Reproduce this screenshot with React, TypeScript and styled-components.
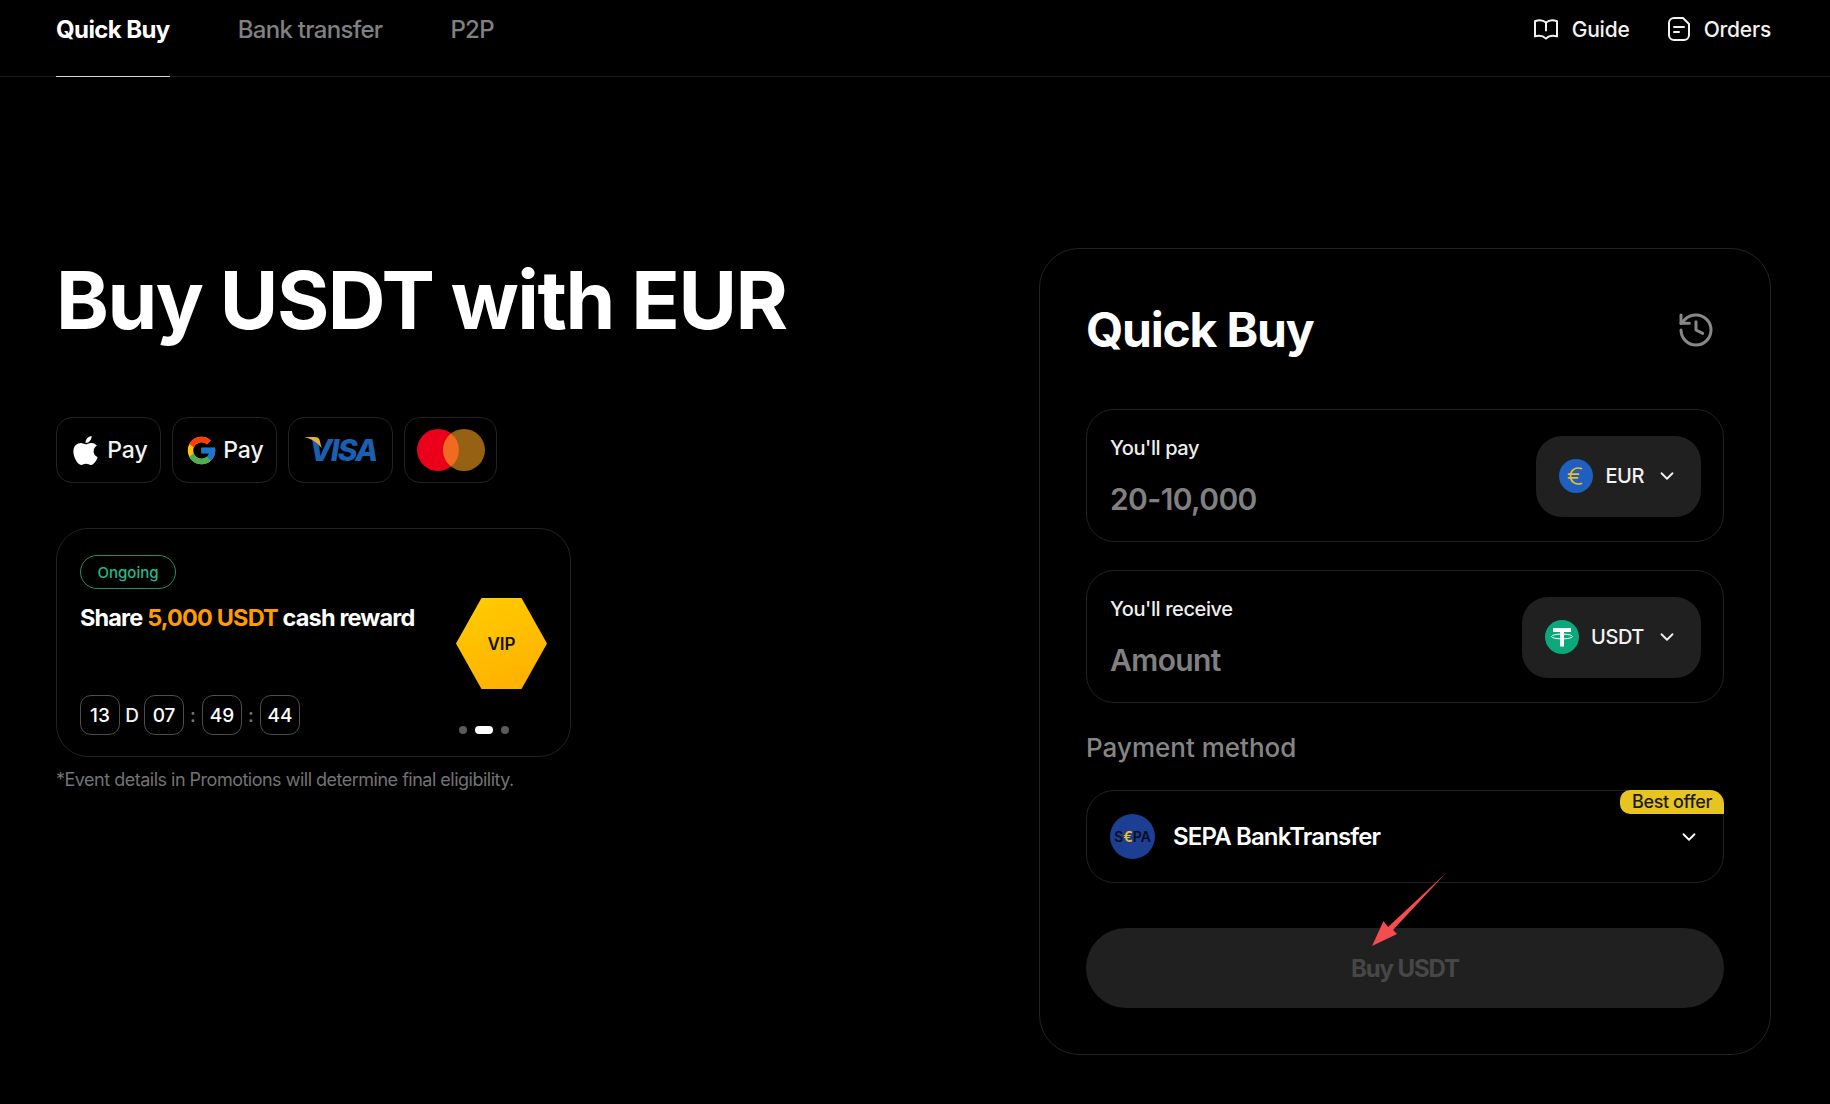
import { ChevronDown, History } from "lucide-react";
import { FaApple } from "react-icons/fa";
import { FcGoogle } from "react-icons/fc";
import styled, { createGlobalStyle } from "styled-components";

const GlobalStyle = createGlobalStyle`
  html, body {
    margin: 0;
    padding: 0;
    background: #000;
    color: #fff;
    font-family: Inter, "Liberation Sans", sans-serif;
  }
  * {
    box-sizing: border-box;
  }
`;

const Page = styled.div`
  min-height: 1104px;
  background: #000;
`;

/* Top bar */
const Header = styled.header`
  height: 77px;
  display: flex;
  align-items: stretch;
  justify-content: space-between;
  padding: 0 59px 0 56px;
  border-bottom: 1px solid #1c1c1c;
`;

const Tabs = styled.nav`
  display: flex;
  gap: 68px;
`;

const Tab = styled.a<{ $active?: boolean }>`
  height: 77px;
  padding-top: 15px;
  line-height: 30px;
  font-size: 24px;
  letter-spacing: ${({ $active }) => ($active ? "-0.6px" : "-0.7px")};
  font-weight: ${({ $active }) => ($active ? 700 : 500)};
  color: ${({ $active }) => ($active ? "#fff" : "#808080")};
  border-bottom: 1px solid ${({ $active }) => ($active ? "#d8d8d8" : "transparent")};
`;

const HeaderLinks = styled.div`
  display: flex;
  gap: 37px;
  padding-top: 14px;
`;

const HeaderLink = styled.a`
  display: flex;
  align-items: center;
  height: 30px;
  gap: 13px;
  font-size: 21px;
  font-weight: 500;
  letter-spacing: -0.2px;
  color: #f2f2f2;
`;

const Main = styled.main`
  display: flex;
  justify-content: space-between;
  align-items: flex-start;
  padding: 171px 59px 0 56px;
`;

/* Left column */
const Intro = styled.section`
  width: 760px;
`;

const Title = styled.h1`
  margin: 4px 0 0;
  font-size: 80px;
  line-height: 96px;
  font-weight: 700;
  letter-spacing: -1.5px;
  white-space: nowrap;
`;

const PayRow = styled.div`
  display: flex;
  gap: 11px;
  margin-top: 69px;
`;

const PayChip = styled.div<{ $width: number }>`
  width: ${({ $width }) => $width}px;
  height: 66px;
  display: flex;
  align-items: center;
  justify-content: center;
  gap: 5px;
  border: 1px solid #222;
  border-radius: 16px;
  font-size: 23px;
  font-weight: 500;
  color: #f2f2f2;
`;

const VisaMark = styled.span`
  position: relative;
  display: block;
  padding-left: 5px;
  font-size: 30px;
  line-height: 26px;
  font-weight: 800;
  font-style: italic;
  letter-spacing: -1.6px;
  color: #1a5fb0;
`;

const VisaSwoosh = styled.svg`
  position: absolute;
  left: 0;
  top: 0;
  width: 18px;
  height: 12px;
`;

const Promo = styled.article`
  width: 515px;
  height: 229px;
  margin-top: 45px;
  padding: 26px 23px 21px 23px;
  display: flex;
  justify-content: space-between;
  border: 1px solid #222;
  border-radius: 32px;
`;

const PromoBody = styled.div`
  display: flex;
  flex-direction: column;
  align-items: flex-start;
`;

const Status = styled.span`
  height: 34px;
  width: 96px;
  display: flex;
  align-items: center;
  justify-content: center;
  border: 1px solid #1b8f6c;
  border-radius: 17px;
  font-size: 15px;
  font-weight: 500;
  color: #22b98b;
`;

const PromoTitle = styled.h3`
  margin: 13px 0 0;
  font-size: 23.5px;
  line-height: 32px;
  font-weight: 700;
  letter-spacing: -0.85px;
  white-space: nowrap;
`;

const Accent = styled.span`
  color: #ff9a00;
`;

const Countdown = styled.div`
  display: flex;
  align-items: center;
  margin-top: auto;
`;

const TimeBox = styled.span`
  width: 40px;
  height: 40px;
  display: flex;
  align-items: center;
  justify-content: center;
  border: 1px solid #4d4d4d;
  border-radius: 11px;
  font-size: 19px;
  font-weight: 500;
`;

const TimeSep = styled.span<{ $unit?: boolean }>`
  width: ${({ $unit }) => ($unit ? 24 : 18)}px;
  text-align: center;
  font-size: 19px;
  font-weight: 500;
  color: ${({ $unit }) => ($unit ? "#f2f2f2" : "#777")};
`;

const PromoSide = styled.div`
  display: flex;
  flex-direction: column;
  align-items: flex-start;
  padding-top: 43px;
`;

const Hexagon = styled.div`
  width: 91px;
  height: 91px;
  display: flex;
  align-items: center;
  justify-content: center;
  clip-path: polygon(28% 0, 72% 0, 100% 50%, 72% 100%, 28% 100%, 0 50%);
  background: linear-gradient(160deg, #ffcd00, #ffae00);
  color: #111;
  font-size: 17px;
  font-weight: 600;
`;

const Dots = styled.div`
  display: flex;
  align-items: center;
  gap: 8px;
  margin: 37px 0 0 3px;
`;

const Dot = styled.span<{ $active?: boolean }>`
  width: ${({ $active }) => ($active ? 18 : 8)}px;
  height: 8px;
  border-radius: 4px;
  background: ${({ $active }) => ($active ? "#fff" : "#5a5a5a")};
`;

const Note = styled.p`
  margin: 11px 0 0;
  font-size: 18px;
  line-height: 24px;
  letter-spacing: -0.5px;
  color: #737373;
  white-space: nowrap;
`;

/* Right card */
const Card = styled.section`
  position: relative;
  width: 732px;
  padding: 50px 46px 46px;
  border: 1px solid #222;
  border-radius: 40px;
`;

const CardHead = styled.div`
  display: flex;
  align-items: center;
  justify-content: space-between;
  height: 60px;
  padding-right: 8px;
  color: #888;
`;

const CardTitle = styled.h2`
  margin: 0;
  font-size: 48px;
  font-weight: 700;
  letter-spacing: -1.2px;
  color: #fff;
`;

const HistoryIcon = styled(History)`
  margin-top: 2px;
`;

const Fields = styled.div`
  display: flex;
  flex-direction: column;
  gap: 28px;
  margin-top: 50px;
`;

const Field = styled.div`
  height: 133px;
  display: flex;
  align-items: center;
  justify-content: space-between;
  padding: 1px 23px 0;
  border: 1px solid #222;
  border-radius: 28px;
`;

const FieldText = styled.div`
  display: flex;
  flex-direction: column;
  gap: 18px;
  padding-top: 1px;
`;

const FieldLabel = styled.label`
  font-size: 20px;
  line-height: 26px;
  font-weight: 500;
  letter-spacing: -0.4px;
  color: #eee;
`;

const FieldValue = styled.span`
  font-size: 30px;
  line-height: 40px;
  font-weight: 600;
  letter-spacing: -0.6px;
  color: #808080;
`;

const Selector = styled.button`
  height: 81px;
  display: flex;
  align-items: center;
  gap: 12px;
  padding: 0 23px;
  margin-right: -1px;
  border: none;
  border-radius: 26px;
  background: #202020;
  font-family: inherit;
  font-size: 20px;
  font-weight: 500;
  letter-spacing: -0.4px;
  color: #f2f2f2;
`;

const CoinWrap = styled.svg`
  width: 34px;
  height: 34px;
  flex: none;
`;

const SectionLabel = styled.div`
  margin-top: 29px;
  font-size: 26px;
  line-height: 32px;
  font-weight: 500;
  color: #858585;
`;

const MethodBox = styled.div`
  position: relative;
  height: 93px;
  margin-top: 26px;
  display: flex;
  align-items: center;
  gap: 18px;
  padding: 0 23px 0 23px;
  border: 1px solid #222;
  border-radius: 28px;
`;

const MethodName = styled.span`
  flex: 1;
  font-size: 24px;
  font-weight: 600;
  letter-spacing: -0.85px;
`;

const SepaLogo = styled.div`
  width: 45px;
  height: 45px;
  flex: none;
  display: flex;
  align-items: center;
  justify-content: center;
  border-radius: 50%;
  background: #1c3f94;
  color: #070d1f;
  font-size: 14px;
  font-weight: 600;
`;

const SepaEuro = styled.span`
  color: #f0c020;
`;

const OfferBadge = styled.span`
  position: absolute;
  top: -1px;
  right: -1px;
  width: 104px;
  height: 24px;
  display: flex;
  align-items: center;
  justify-content: center;
  padding-bottom: 1px;
  background: #e8c420;
  border-radius: 10px 14px 0 10px;
  font-size: 18px;
  font-weight: 500;
  letter-spacing: -0.4px;
  color: #1a1a1a;
`;

const BuyButton = styled.button`
  width: 100%;
  height: 80px;
  margin-top: 45px;
  border: none;
  border-radius: 40px;
  background: #202020;
  font-family: inherit;
  font-size: 24px;
  font-weight: 700;
  letter-spacing: -1.1px;
  color: #474747;
`;

/* Red annotation arrow over the button */
const Arrow = styled.svg`
  position: absolute;
  left: 331px;
  top: 623px;
  width: 76px;
  height: 75px;
`;

function BookIcon() {
  return (
    <svg width="26" height="26" viewBox="0 0 26 26" fill="none" stroke="#f2f2f2" strokeWidth="2" strokeLinejoin="round" strokeLinecap="round">
      <path d="M2 5.2c4-1.6 8-1.2 11 1.3 3-2.5 7-2.9 11-1.3v15.2c-4-1-8-.7-11 2.2-3-2.9-7-3.2-11-2.2z" />
      <path d="M13 6.5v8" />
    </svg>
  );
}

function OrdersIcon() {
  return (
    <svg width="24" height="26" viewBox="0 0 24 26" fill="none" stroke="#f2f2f2" strokeWidth="2" strokeLinecap="round" strokeLinejoin="round">
      <path d="M7 2h9l6 6v11a5 5 0 0 1-5 5H7a5 5 0 0 1-5-5V7a5 5 0 0 1 5-5z" />
      <path d="M7 11h10M7 16h5" />
    </svg>
  );
}

function MastercardLogo() {
  return (
    <svg width="68" height="42" viewBox="0 0 68 42">
      <circle cx="21" cy="21" r="21" fill="#eb001b" />
      <circle cx="47" cy="21" r="21" fill="#966113" />
      <path d="M34 4.51A21 21 0 0 1 34 37.49 21 21 0 0 1 34 4.51z" fill="#f26a22" />
    </svg>
  );
}

function EuroCoin() {
  return (
    <CoinWrap viewBox="0 0 34 34">
      <circle cx="17" cy="17" r="17" fill="#1f5fc0" />
      <path d="M22.5 9.5C15.5 7.5 11.5 12 11.5 17s4 9.5 11 7.5M9.5 15.2h10M9.5 18.8h9" fill="none" stroke="#efc01f" strokeWidth="1.7" strokeLinecap="round" />
    </CoinWrap>
  );
}

function TetherCoin() {
  return (
    <CoinWrap viewBox="0 0 34 34">
      <circle cx="17" cy="17" r="17" fill="#0aa87a" />
      <path d="M8 8h18v4h-7v14.5h-4V12H8z" fill="#fff" />
      <ellipse cx="17" cy="16.5" rx="10.5" ry="2.4" fill="none" stroke="#fff" strokeWidth="1" />
    </CoinWrap>
  );
}

export default function App() {
  return (
    <Page>
      <GlobalStyle />
      <Header>
        <Tabs>
          <Tab $active>Quick Buy</Tab>
          <Tab>Bank transfer</Tab>
          <Tab>P2P</Tab>
        </Tabs>
        <HeaderLinks>
          <HeaderLink>
            <BookIcon />
            Guide
          </HeaderLink>
          <HeaderLink>
            <OrdersIcon />
            Orders
          </HeaderLink>
        </HeaderLinks>
      </Header>

      <Main>
        <Intro>
          <Title>Buy USDT with EUR</Title>

          <PayRow>
            <PayChip $width={105}>
              <FaApple size={33} color="#fff" />
              Pay
            </PayChip>
            <PayChip $width={105}>
              <FcGoogle size={33} />
              Pay
            </PayChip>
            <PayChip $width={105}>
              <VisaMark>
                VISA
                <VisaSwoosh viewBox="0 0 18 12">
                  <path d="M0 0h11c2.4 0 4 1 4.6 3l2 8C14 6 8 2 0 0z" fill="#e6b13c" />
                </VisaSwoosh>
              </VisaMark>
            </PayChip>
            <PayChip $width={93}>
              <MastercardLogo />
            </PayChip>
          </PayRow>

          <Promo>
            <PromoBody>
              <Status>Ongoing</Status>
              <PromoTitle>
                Share <Accent>5,000 USDT</Accent> cash reward
              </PromoTitle>
              <Countdown>
                <TimeBox>13</TimeBox>
                <TimeSep $unit>D</TimeSep>
                <TimeBox>07</TimeBox>
                <TimeSep>:</TimeSep>
                <TimeBox>49</TimeBox>
                <TimeSep>:</TimeSep>
                <TimeBox>44</TimeBox>
              </Countdown>
            </PromoBody>
            <PromoSide>
              <Hexagon>VIP</Hexagon>
              <Dots>
                <Dot />
                <Dot $active />
                <Dot />
              </Dots>
            </PromoSide>
          </Promo>

          <Note>*Event details in Promotions will determine final eligibility.</Note>
        </Intro>

        <Card>
          <CardHead>
            <CardTitle>Quick Buy</CardTitle>
            <HistoryIcon size={40} strokeWidth={1.8} />
          </CardHead>

          <Fields>
            <Field>
              <FieldText>
                <FieldLabel>You'll pay</FieldLabel>
                <FieldValue>20-10,000</FieldValue>
              </FieldText>
              <Selector>
                <EuroCoin />
                EUR
                <ChevronDown size={22} />
              </Selector>
            </Field>
            <Field>
              <FieldText>
                <FieldLabel>You'll receive</FieldLabel>
                <FieldValue>Amount</FieldValue>
              </FieldText>
              <Selector>
                <TetherCoin />
                USDT
                <ChevronDown size={22} />
              </Selector>
            </Field>
          </Fields>

          <SectionLabel>Payment method</SectionLabel>
          <MethodBox>
            <OfferBadge>Best offer</OfferBadge>
            <SepaLogo>
              S<SepaEuro>€</SepaEuro>PA
            </SepaLogo>
            <MethodName>SEPA BankTransfer</MethodName>
            <ChevronDown size={22} />
          </MethodBox>

          <BuyButton>Buy USDT</BuyButton>

          <Arrow viewBox="0 0 76 75">
            <polygon points="75,1 17,55 12.5,49 1,74 26,62 22,58" fill="#f54c4f" />
          </Arrow>
        </Card>
      </Main>
    </Page>
  );
}
